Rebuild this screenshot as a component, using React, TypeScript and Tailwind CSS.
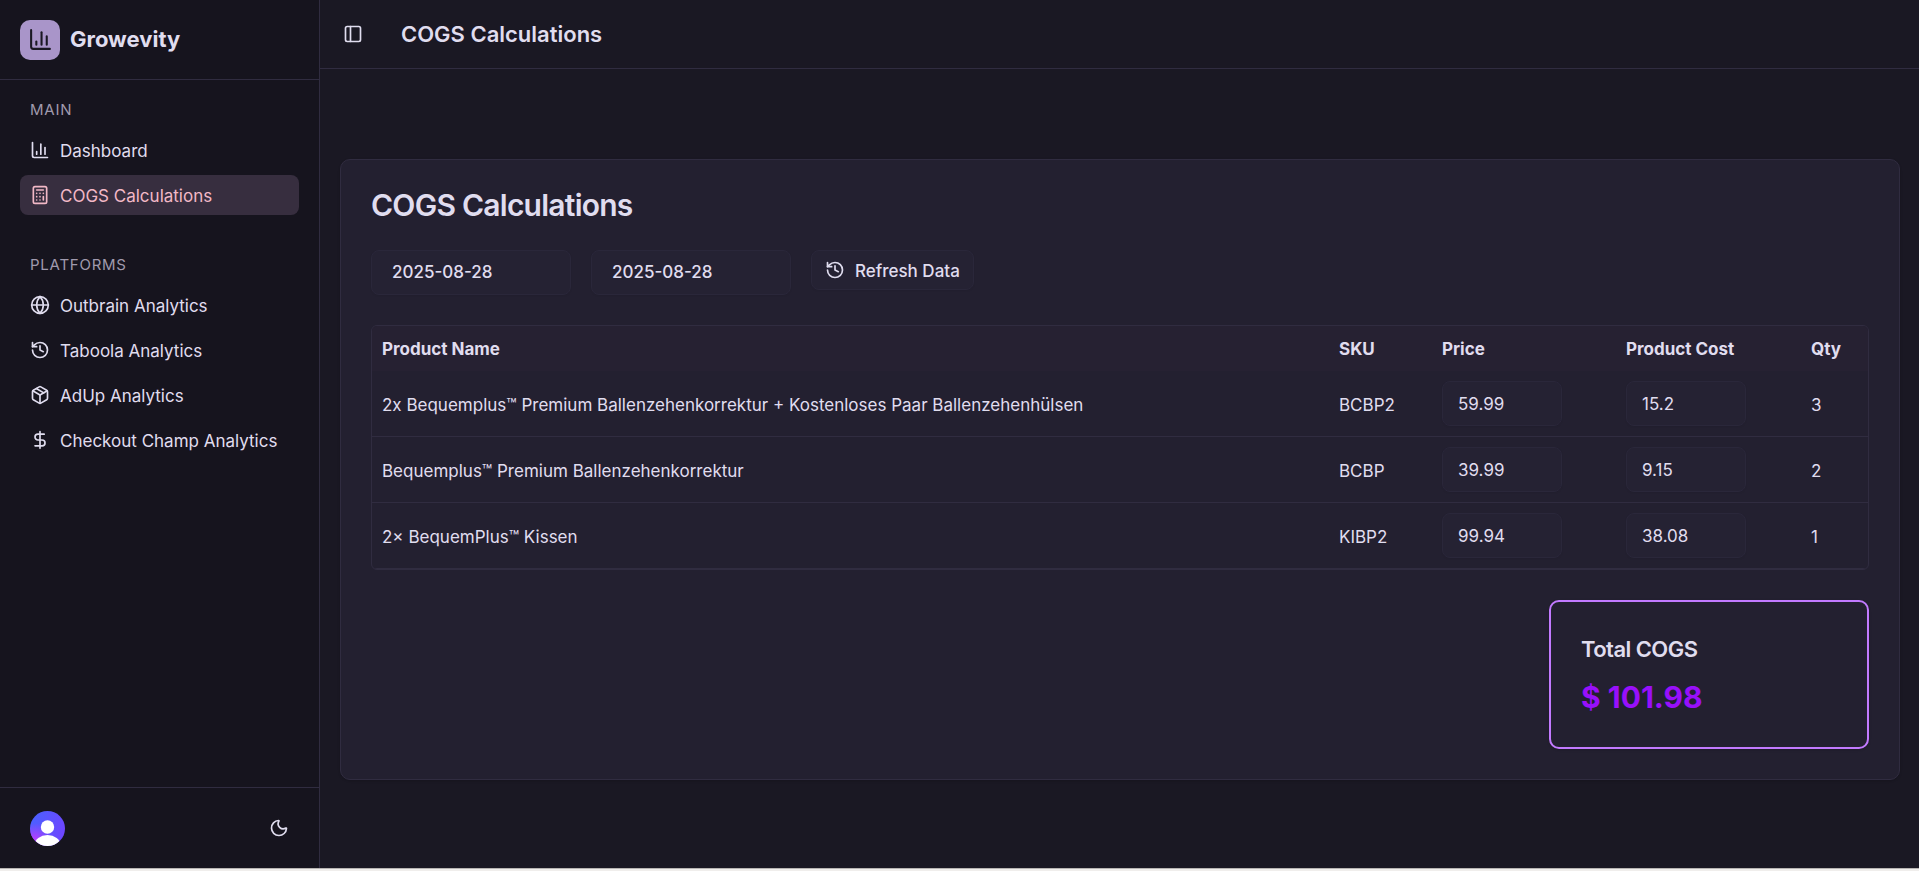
import { useState } from 'react';
import type { LucideIcon } from 'lucide-react';
import {
  Calculator,
  ChartColumn,
  DollarSign,
  Globe,
  History,
  Moon,
  Package,
  PanelLeft,
} from 'lucide-react';

type NavItem = { label: string; icon: LucideIcon; active?: boolean };

const mainItems: NavItem[] = [
  { label: 'Dashboard', icon: ChartColumn },
  { label: 'COGS Calculations', icon: Calculator, active: true },
];

const platformItems: NavItem[] = [
  { label: 'Outbrain Analytics', icon: Globe },
  { label: 'Taboola Analytics', icon: History },
  { label: 'AdUp Analytics', icon: Package },
  { label: 'Checkout Champ Analytics', icon: DollarSign },
];

const products = [
  {
    name: '2x Bequemplus™ Premium Ballenzehenkorrektur + Kostenloses Paar Ballenzehenhülsen',
    sku: 'BCBP2',
    price: '59.99',
    cost: '15.2',
    qty: 3,
  },
  { name: 'Bequemplus™ Premium Ballenzehenkorrektur', sku: 'BCBP', price: '39.99', cost: '9.15', qty: 2 },
  { name: '2× BequemPlus™ Kissen', sku: 'KIBP2', price: '99.94', cost: '38.08', qty: 1 },
];

function NavGroup({ title, items }: { title: string; items: NavItem[] }) {
  return (
    <section className="px-5 py-2.5">
      <h2 className="flex h-10 items-center px-2.5 text-[15px] tracking-wider text-[#a09aad]">{title}</h2>
      <ul className="flex flex-col gap-[5px]">
        {items.map(({ label, icon: Icon, active }) => (
          <li key={label}>
            <a
              href="#"
              aria-current={active ? 'page' : undefined}
              className={
                active
                  ? 'flex h-10 items-center gap-2.5 rounded-lg bg-[#372e3f] px-2.5 text-[17px] leading-6 text-[#f2b8c6]'
                  : 'flex h-10 items-center gap-2.5 rounded-lg px-2.5 text-[17px] leading-6 text-[#e0ddef]'
              }
            >
              <Icon size={20} aria-hidden="true" />
              <span className="pt-0.5">{label}</span>
            </a>
          </li>
        ))}
      </ul>
    </section>
  );
}

function Avatar() {
  return (
    <svg viewBox="0 0 35 35" className="size-[35px] rounded-full" aria-hidden="true">
      <defs>
        <linearGradient id="avatar-base" x1="0" y1="0" x2="1" y2="0.4">
          <stop offset="0" stopColor="#4763ff" />
          <stop offset="1" stopColor="#6c47ff" />
        </linearGradient>
        <radialGradient id="avatar-glow" cx="0.12" cy="0.85" r="0.5">
          <stop offset="0" stopColor="#c03cff" />
          <stop offset="1" stopColor="#c03cff" stopOpacity="0" />
        </radialGradient>
      </defs>
      <rect width="35" height="35" fill="url(#avatar-base)" />
      <rect width="35" height="35" fill="url(#avatar-glow)" />
      <circle cx="17.5" cy="16" r="6.7" fill="#fff" />
      <ellipse cx="17.5" cy="34" rx="13" ry="10" fill="#fff" />
    </svg>
  );
}

function Sidebar() {
  return (
    <aside className="flex w-80 shrink-0 flex-col border-r border-[#302c40] bg-[#16141e]">
      <div className="flex h-20 items-center gap-2.5 border-b border-[#302c40] px-5">
        <span className="flex size-10 items-center justify-center rounded-[10px] bg-[#a995c9] text-[#1a1823]">
          <ChartColumn size={25} aria-hidden="true" />
        </span>
        <span className="text-[22px] font-bold">Growevity</span>
      </div>
      <nav className="flex grow flex-col gap-2.5">
        <NavGroup title="MAIN" items={mainItems} />
        <NavGroup title="PLATFORMS" items={platformItems} />
      </nav>
      <div className="flex items-center justify-between border-t border-[#302c40] p-5">
        <button type="button" aria-label="Account" className="px-2.5">
          <Avatar />
        </button>
        <button type="button" aria-label="Toggle theme" className="flex size-10 items-center justify-center">
          <Moon size={20} aria-hidden="true" />
        </button>
      </div>
    </aside>
  );
}

const fieldClass =
  'h-[45px] rounded-lg border border-[#2a273a] bg-[#252233] text-[17px] text-[#e0ddef] shadow-xs outline-none';

function ProductTable() {
  const [rows, setRows] = useState(products);
  const update = (index: number, key: 'price' | 'cost', value: string) =>
    setRows(rows.map((row, i) => (i === index ? { ...row, [key]: value } : row)));

  return (
    <div className="overflow-hidden rounded-md border border-[#302c40]">
      <table className="w-full table-fixed text-left text-[17px] leading-6">
        <colgroup>
          <col />
          <col className="w-[103px]" />
          <col className="w-[184px]" />
          <col className="w-[185px]" />
          <col className="w-[67px]" />
        </colgroup>
        <thead className="bg-[#262132]">
          <tr className="h-[45px]">
            {['Product Name', 'SKU', 'Price', 'Product Cost', 'Qty'].map((heading) => (
              <th key={heading} scope="col" className="px-2.5 pt-0.5 pb-0 font-bold whitespace-nowrap">
                {heading}
              </th>
            ))}
          </tr>
        </thead>
        <tbody>
          {rows.map((row, index) => (
            <tr key={row.sku} className="h-[66px] border-b border-[#302c40]">
              <td className="px-2.5 pt-0.5 pb-0">{row.name}</td>
              <td className="px-2.5 pt-0.5 pb-0">{row.sku}</td>
              <td className="px-2.5 py-0">
                <input
                  aria-label={`Price of ${row.sku}`}
                  value={row.price}
                  onChange={(e) => update(index, 'price', e.target.value)}
                  className={`${fieldClass} block w-[120px] px-[15px]`}
                />
              </td>
              <td className="px-2.5 py-0">
                <input
                  aria-label={`Product cost of ${row.sku}`}
                  value={row.cost}
                  onChange={(e) => update(index, 'cost', e.target.value)}
                  className={`${fieldClass} block w-[120px] px-[15px]`}
                />
              </td>
              <td className="px-2.5 pt-0.5 pb-0">{row.qty}</td>
            </tr>
          ))}
        </tbody>
      </table>
    </div>
  );
}

export default function App() {
  return (
    <div className="flex min-h-screen flex-col bg-[#1a1823] font-['Inter',sans-serif] text-[#e0ddef]">
      <div className="flex grow">
        <Sidebar />
        <div className="flex min-w-0 grow flex-col">
          <header className="flex h-[69px] items-center gap-5 border-b border-[#302c40] px-[15px]">
            <button type="button" aria-label="Toggle sidebar" className="flex size-9 items-center justify-center">
              <PanelLeft size={20} aria-hidden="true" />
            </button>
            <span className="px-2.5 text-[22px] font-semibold">COGS Calculations</span>
          </header>
          <main className="flex grow flex-col justify-center pt-0.5 pr-[19px] pl-5">
            <div className="flex flex-col gap-[30px] rounded-[10px] border border-[#302c40] bg-[#232030] p-[30px] shadow-sm">
              <h1 className="text-[30px] leading-[30px] font-semibold tracking-tight">COGS Calculations</h1>
              <div className="flex items-start gap-5">
                <input
                  aria-label="Start date"
                  defaultValue="2025-08-28"
                  className={`${fieldClass} w-[200px] px-5 font-medium`}
                />
                <input
                  aria-label="End date"
                  defaultValue="2025-08-28"
                  className={`${fieldClass} w-[200px] px-5 font-medium`}
                />
                <button
                  type="button"
                  className="flex h-10 items-center gap-2.5 rounded-lg border border-[#2a273a] bg-[#252233] px-[13px] text-[17px] leading-6 font-medium shadow-xs"
                >
                  <History size={20} aria-hidden="true" />
                  <span className="pt-0.5">Refresh Data</span>
                </button>
              </div>
              <ProductTable />
              <section className="flex w-80 flex-col gap-2.5 self-end rounded-[10px] border-2 border-[#c27aff] p-[30px] shadow-sm">
                <h2 className="text-[22px] leading-[35px] font-semibold tracking-tight">Total COGS</h2>
                <p className="text-[30px] leading-10 font-bold text-[#9810fa]">$ 101.98</p>
              </section>
            </div>
          </main>
        </div>
      </div>
      <div className="h-[3px] border-t border-[#b8b5b3] bg-[#f0eeec]" />
    </div>
  );
}
